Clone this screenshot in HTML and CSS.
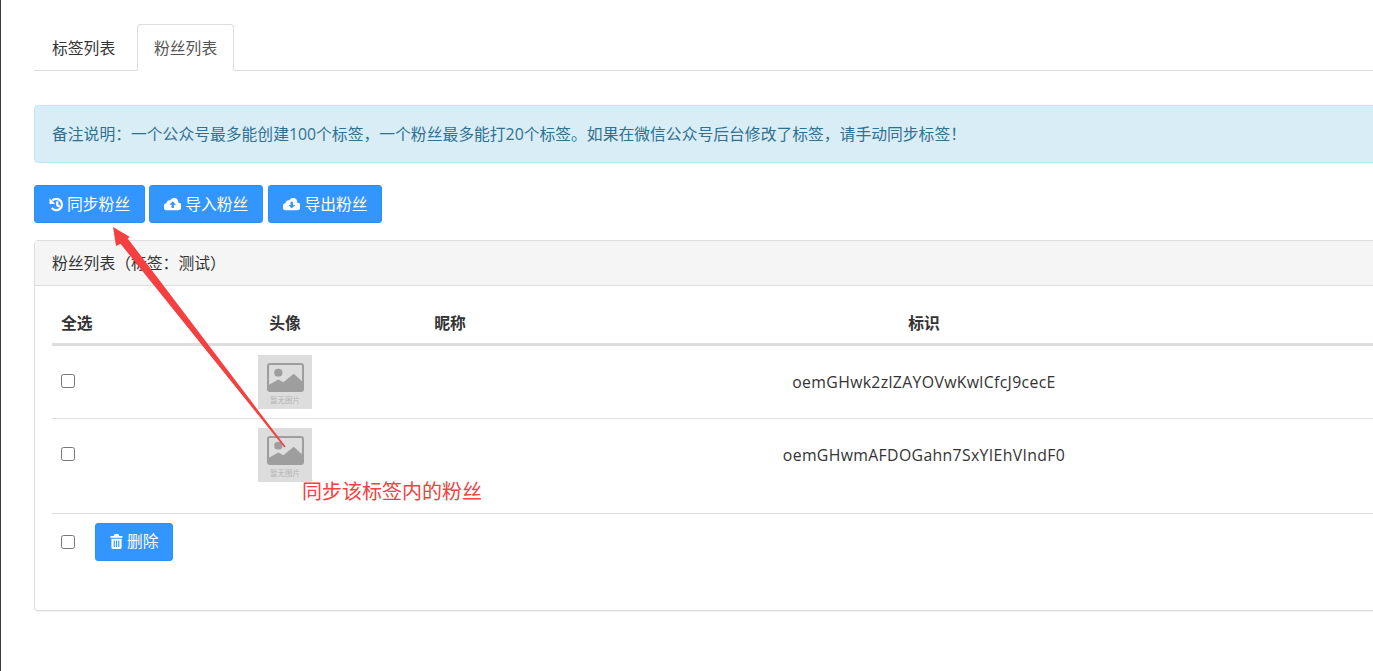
FILE: index.html
```html
<!DOCTYPE html>
<html lang="zh-CN">
<head>
    <meta charset="UTF-8">
    <meta name="viewport" content="width=device-width, initial-scale=1.0">
    <title>粉丝列表</title>
    <link rel="stylesheet" href="styles.css">
</head>
<body>
    <div class="page">
        <ul class="tabs">
            <li class="tab">标签列表</li>
            <li class="tab active">粉丝列表</li>
        </ul>

        <div class="alert">备注说明：一个公众号最多能创建100个标签，一个粉丝最多能打20个标签。如果在微信公众号后台修改了标签，请手动同步标签！</div>

        <div class="toolbar">
            <button class="btn" type="button">
                <svg class="icon" viewBox="0 0 16 16"><path class="icon-line" d="M3.600 3.800A6 6 0 1 1 3 11.600"/><path d="M.5 1.200V7.400h6.200z"/><path class="icon-line" d="M8.800 4.600v4l2.600 1.800"/></svg>同步粉丝
            </button>
            <button class="btn" type="button">
                <svg class="icon icon-wide" viewBox="0 0 18 14"><path fill-rule="evenodd" d="M14.6 5.6A4.4 4.4 0 0 0 6.2 3.4 2.8 2.8 0 0 0 2.6 6.2 3.6 3.6 0 0 0 3.8 13.4h10.4a3.9 3.9 0 0 0 .4-7.8zM9 4.2l3.4 3.6H10.2v3.4H7.8V7.8H5.6z"/></svg>导入粉丝
            </button>
            <button class="btn btn-spaced" type="button">
                <svg class="icon icon-wide" viewBox="0 0 18 14"><path fill-rule="evenodd" d="M14.6 5.6A4.4 4.4 0 0 0 6.2 3.4 2.8 2.8 0 0 0 2.6 6.2 3.6 3.6 0 0 0 3.8 13.4h10.4a3.9 3.9 0 0 0 .4-7.8zM9 11.6L5.6 8h2.2V4.6h2.4V8h2.2z"/></svg>导出粉丝
            </button>
        </div>

        <div class="panel">
            <div class="panel-heading">粉丝列表（标签：测试）</div>
            <div class="panel-body">
                <table class="fans">
                    <colgroup>
                        <col class="col-check">
                        <col class="col-avatar">
                        <col class="col-name">
                        <col class="col-id">
                        <col>
                    </colgroup>
                    <thead>
                        <tr>
                            <th class="left">全选</th>
                            <th>头像</th>
                            <th>昵称</th>
                            <th>标识</th>
                            <th></th>
                        </tr>
                    </thead>
                    <tbody>
                        <tr>
                            <td><div class="cell"><input class="check" type="checkbox"></div></td>
                            <td>
                                <div class="thumb">
                                    <svg class="thumb-icon" viewBox="0 0 36 30" preserveAspectRatio="none"><rect x="1" y="1" width="34" height="28" rx="2" fill="none" stroke="#9e9e9e" stroke-width="2"/><circle cx="11" cy="10" r="4" fill="#9e9e9e"/><path d="M1 23l10-6 5 3 10-9 9 9v9H1z" fill="#9e9e9e"/></svg>
                                    <span class="thumb-text">暂无图片</span>
                                </div>
                            </td>
                            <td></td>
                            <td class="center"><div class="cell openid">oemGHwk2zlZAYOVwKwlCfcJ9cecE</div></td>
                            <td></td>
                        </tr>
                        <tr class="tall">
                            <td><div class="cell"><input class="check" type="checkbox"></div></td>
                            <td>
                                <div class="thumb">
                                    <svg class="thumb-icon" viewBox="0 0 36 30" preserveAspectRatio="none"><rect x="1" y="1" width="34" height="28" rx="2" fill="none" stroke="#9e9e9e" stroke-width="2"/><circle cx="11" cy="10" r="4" fill="#9e9e9e"/><path d="M1 23l10-6 5 3 10-9 9 9v9H1z" fill="#9e9e9e"/></svg>
                                    <span class="thumb-text">暂无图片</span>
                                </div>
                            </td>
                            <td></td>
                            <td class="center"><div class="cell openid">oemGHwmAFDOGahn7SxYIEhVIndF0</div></td>
                            <td></td>
                        </tr>
                    </tbody>
                </table>
                <div class="table-foot">
                    <input class="check" type="checkbox">
                    <button class="btn" type="button">
                        <svg class="icon icon-trash" viewBox="0 0 14 16"><path fill-rule="evenodd" d="M5 0h4l1 2h3.500v2H.5V2H4zM1.500 5h11v9.500a1.500 1.500 0 0 1-1.500 1.500H3a1.500 1.500 0 0 1-1.500-1.500zM4 7v7h1.200V7zm2.400 0v7h1.200V7zm2.400 0v7H10V7z"/></svg>删除
                    </button>
                </div>
            </div>
        </div>

        <!-- annotation drawn over the screenshot -->
        <svg class="arrow" viewBox="0 0 1373 671">
            <polygon points="113,227 130,237 127.500,238.200 285.600,446.600 284.400,447.600 120.500,243.800 116,246" fill="#f44040"/>
        </svg>
        <div class="note">同步该标签内的粉丝</div>
    </div>
</body>
</html>
```

FILE: styles.css
```css
* {
    box-sizing: border-box;
}

html, body {
    margin: 0;
    height: 100%;
    overflow: hidden;
}

body {
    font-family: "Open Sans", "Noto Sans CJK SC", sans-serif;
    font-size: 15.8px;
    color: #333;
    background-color: #fff;
}

.page {
    position: relative;
    height: 671px;
    width: 1440px;
    padding: 24px 0 0 33px;
    border-left: 1px solid #3a3a3a;
}

.tabs {
    display: flex;
    list-style: none;
    margin: 0;
    padding: 0;
    height: 47px;
    border-bottom: 1px solid #ddd;
}

.tab {
    height: 47px;
    padding: 0 17px;
    line-height: 46px;
    margin-right: 3.8px;
    border: 1px solid transparent;
    border-radius: 4px 4px 0 0;
}

.tab.active {
    padding: 0 16px;
    color: #555;
    background-color: #fff;
    border-color: #ddd;
    border-bottom-color: #fff;
}

.alert {
    height: 58px;
    margin-top: 34px;
    padding: 0 17px;
    line-height: 56px;
    color: #31708f;
    background-color: #d9edf7;
    border: 1px solid #bce8f1;
    border-radius: 4px;
}

.toolbar {
    display: flex;
    gap: 4px;
    margin-top: 22px;
}

.btn {
    display: inline-flex;
    align-items: center;
    justify-content: center;
    height: 38px;
    padding: 0 13.5px 2px 14px;
    font-family: inherit;
    font-size: 15.8px;
    color: #fff;
    background-color: #3396ff;
    border: 1px solid #2d8ff5;
    border-radius: 3px;
}

.btn-spaced {
    margin-left: 1px;
}

.icon {
    width: 15px;
    height: 15px;
    margin: 2px 3px 0 0;
    fill: #fff;
}

.icon-line {
    fill: none;
    stroke: #fff;
    stroke-width: 2.4;
}

.icon-wide {
    width: 17.5px;
    height: 14px;
    margin-right: 4px;
}

.icon-trash {
    width: 13px;
    height: 15px;
    margin-right: 4px;
}

.panel {
    height: 371px;
    margin-top: 17px;
    background-color: #fff;
    border: 1px solid #ddd;
    border-radius: 4px;
    box-shadow: 0 1px 1px rgba(0, 0, 0, 0.05);
}

.panel-heading {
    height: 45px;
    padding: 0 17px;
    line-height: 45px;
    background-color: #f5f5f5;
    border-bottom: 1px solid #ddd;
}

.panel-body {
    padding: 17px 17px 0;
}

.fans {
    width: 100%;
    table-layout: fixed;
    border-collapse: collapse;
}

.col-check { width: 134px; }
.col-avatar { width: 198px; }
.col-name { width: 132px; }
.col-id { width: 816px; }

.fans th {
    height: 41px;
    padding: 0 9px 1px;
    text-align: center;
    font-weight: 700;
    border-bottom: 3px solid #ddd;
}

.fans th.left {
    text-align: left;
}

.fans td {
    padding: 9px;
    vertical-align: top;
    border-bottom: 1px solid #ddd;
}

.fans .tall td {
    padding-bottom: 31px;
}

.cell {
    display: flex;
    align-items: center;
    height: 54px;
}

.cell .check {
    margin-bottom: 2px;
}

.center .cell {
    justify-content: center;
}

.openid {
    letter-spacing: 0.35px;
}

.check {
    width: 14px;
    height: 14px;
    margin: 0;
}

.thumb {
    display: flex;
    flex-direction: column;
    align-items: center;
    width: 54px;
    height: 54px;
    margin: 0 auto;
    padding-top: 8px;
    background-color: #dedddd;
}

.thumb-icon {
    display: block;
    width: 37px;
    height: 29px;
}

.thumb-text {
    margin-top: 4px;
    font-size: 7.5px;
    line-height: 9px;
    color: #b4b4b4;
}

.table-foot {
    display: flex;
    align-items: center;
    gap: 20px;
    padding: 9px 9px 0;
}

/* arrow and label lie over the table */
.arrow {
    position: absolute;
    top: 0;
    left: -1px;
    width: 1373px;
    height: 671px;
    pointer-events: none;
}

.note {
    position: absolute;
    top: 478px;
    left: 301px;
    font-size: 20px;
    line-height: 28px;
    color: #f44040;
    white-space: nowrap;
}
```
